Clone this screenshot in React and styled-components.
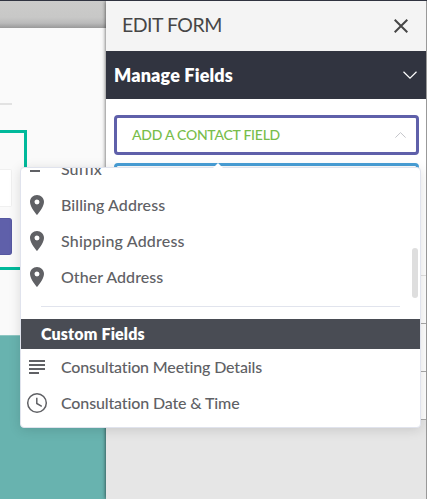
import React from "react";
import styled, { createGlobalStyle } from "styled-components";

const Global = createGlobalStyle`
  *, *::before, *::after { box-sizing: border-box; }
  body { margin: 0; overflow: hidden; font-family: Lato, "Open Sans", sans-serif; }
`;

const Screen = styled.div`
  position: relative;
  width: 427px;
  height: 499px;
  overflow: hidden;
  display: flex;
  border-top: 1px solid #303340;
  background: #fafafa;
`;

const Preview = styled.section`
  width: 106px;
  display: flex;
  flex-direction: column;
  background: #fafafa;
`;

const PreviewBar = styled.div`
  height: 27px;
  background: linear-gradient(#cbcbca 0, #c8c8c7 60%, #bababa 82%, #999 100%);
`;

const PreviewPage = styled.div`
  height: 307px;
`;

const Rule = styled.div`
  width: 12px;
  height: 2px;
  margin-top: 75px;
  background: #e2e2e2;
`;

const SelectedBlock = styled.div`
  width: 27px;
  height: 140px;
  margin-top: 25px;
  padding-top: 36px;
  border: 3px solid #00b99b;
  border-left: 0;
`;

const PreviewInput = styled.div`
  width: 12px;
  height: 38px;
  border: 1px solid #f0f0f0;
  border-left: 0;
  border-radius: 0 2px 2px 0;
  background: #fff;
`;

const PreviewButton = styled.div`
  width: 12px;
  height: 37px;
  margin-top: 11px;
  border: 1px solid #5557a0;
  border-left: 0;
  border-radius: 0 3px 3px 0;
  background: #5f60aa;
`;

const PreviewFooter = styled.div`
  flex: 1;
  border-top: 1px solid #8fc7c3;
  background: #68b3af;
`;

const Panel = styled.aside`
  width: 320px;
  display: flex;
  flex-direction: column;
  background: #e6e6e6;
  box-shadow: 0 0 4px rgba(0, 0, 0, 0.7);
`;

const PanelHeader = styled.header`
  height: 50px;
  padding: 0 18px 0 16px;
  display: flex;
  align-items: center;
  justify-content: space-between;
  background: #f4f4f4;
  color: #464646;
`;

const SectionHeader = styled.div`
  height: 48px;
  padding: 0 9px 0 8px;
  display: flex;
  align-items: center;
  justify-content: space-between;
  background: #313440;
  color: #fff;
`;

const Text = styled.span`
  padding-bottom: ${(p) => p.$lift ?? 1}px;
  font-size: ${(p) => p.$size || 16}px;
  font-weight: ${(p) => p.$weight || 500};
  letter-spacing: ${(p) => p.$spacing || 0}px;
  font-variant-ligatures: none;
  line-height: 20px;
  white-space: nowrap;
`;

const PanelBody = styled.div`
  height: 176px;
  padding: 16px 7px 0 8px;
  display: flex;
  flex-direction: column;
  gap: 8px;
  background: #fff;
`;

const FieldButton = styled.div`
  height: 40px;
  padding: 0 10px 0 15px;
  display: flex;
  flex-shrink: 0;
  align-items: center;
  justify-content: space-between;
  border: 3px solid ${(p) => p.$color};
  border-radius: 4px;
  color: #78bd4b;
`;

const FieldRow = styled.div`
  height: 48px;
  border-top: 1px solid ${(p) => p.$line};
  background: #fff;
`;

const PanelEnd = styled.div`
  height: 1px;
  background: #aaa;
`;

const PageEdge = styled.div`
  width: 1px;
  background: #999;
`;

const Menu = styled.div`
  position: absolute;
  left: 20px;
  top: 166px;
  width: 401px;
  height: 261px;
  border: 1px solid #e0e3ed;
  border-radius: 4px;
  background: #fff;
  box-shadow: 0 2px 12px rgba(0, 0, 0, 0.13);
`;

const MenuCaret = styled.div`
  position: absolute;
  left: 192px;
  top: -5px;
  border: 5px solid transparent;
  border-top: 0;
  border-bottom-color: #fff;
`;

const MenuViewport = styled.div`
  height: 100%;
  overflow: hidden;
  display: flex;
  flex-direction: column;
  border-radius: 3px;
`;

const MenuItem = styled.div`
  height: 36px;
  flex-shrink: 0;
  display: flex;
  align-items: center;
  color: #606165;
  padding-left: 4px;
  &:first-child { margin-top: -17px; }
`;

const IconSlot = styled.span`
  width: 24px;
  height: 24px;
  margin-right: 12px;
  svg { display: block; }
`;

const Divider = styled.div`
  height: 1px;
  margin: 11px 20px 12px;
  flex-shrink: 0;
  background: #e1e4ed;
`;

const GroupHeader = styled.div`
  height: 30px;
  flex-shrink: 0;
  padding-left: 20px;
  display: flex;
  align-items: center;
  background: #494c54;
  color: #fff;
`;

const ScrollThumb = styled.div`
  position: absolute;
  right: 2px;
  top: 80px;
  width: 6px;
  height: 50px;
  border-radius: 3px;
  background: #dedede;
`;

const CloseIcon = () => (
  <svg width="14" height="14" viewBox="0 0 14 14" fill="none" stroke="#464646" strokeWidth="2">
    <path d="M.7.7l12.6 12.6M13.3.7L.7 13.3" />
  </svg>
);

const ChevronDown = () => (
  <svg width="14" height="8" viewBox="0 0 14 8" fill="none" stroke="#fff" strokeWidth="1.2">
    <path d="M.5.7L7 7.1 13.5.7" />
  </svg>
);

const ChevronUp = () => (
  <svg width="11" height="6" viewBox="0 0 11 6" fill="none" stroke="#c4c5ca" strokeWidth="1">
    <path d="M.4 5.6L5.5.6l5.1 5" />
  </svg>
);

const icons = {
  text: <path d="M5 4h14v2H5zM5 8h14v2H5zM5 13h10v2H5z" fill="#606165" />,
  pin: (
    <path
      fill="#606165"
      d="M12 2C8.13 2 5 5.13 5 9c0 5.25 7 13 7 13s7-7.75 7-13c0-3.87-3.13-7-7-7zm0 9.5a2.5 2.5 0 0 1 0-5 2.5 2.5 0 0 1 0 5z"
    />
  ),
  lines: <path d="M4 5h16v2H4zM4 9h16v2H4zM4 13h16v2H4zM4 17h10v2H4z" fill="#606165" />,
  clock: (
    <g fill="none" stroke="#606165" strokeWidth="1.5">
      <circle cx="12" cy="12" r="9.3" />
      <path d="M11.8 6.8v5.7l5 2.9" />
    </g>
  ),
};

const Item = ({ icon, label, spacing }) => (
  <MenuItem>
    <IconSlot>
      <svg width="24" height="24" viewBox="0 0 24 24">{icons[icon]}</svg>
    </IconSlot>
    <Text $spacing={spacing}>{label}</Text>
  </MenuItem>
);

export default function App() {
  return (
    <>
      <Global />
      <Screen>
        <Preview>
          <PreviewBar />
          <PreviewPage>
            <Rule />
            <SelectedBlock>
              <PreviewInput />
              <PreviewButton />
            </SelectedBlock>
          </PreviewPage>
          <PreviewFooter />
        </Preview>
        <Panel>
          <PanelHeader>
            <Text $size={19.5} $weight={400} $spacing={-0.5} $lift={2}>EDIT FORM</Text>
            <CloseIcon />
          </PanelHeader>
          <SectionHeader>
            <Text $size={18} $weight={800} $spacing={0.15} $lift={1}>Manage Fields</Text>
            <ChevronDown />
          </SectionHeader>
          <PanelBody>
            <FieldButton $color="#5f60aa">
              <Text $size={14} $spacing={-0.25} $lift={0}>ADD A CONTACT FIELD</Text>
              <ChevronUp />
            </FieldButton>
            <FieldButton $color="#489fd7" />
          </PanelBody>
          <FieldRow $line="#e2e2e2" />
          <FieldRow $line="#aaa" />
          <FieldRow $line="#aaa" />
          <PanelEnd />
        </Panel>
        <PageEdge />
        <Menu>
          <MenuCaret />
          <MenuViewport>
            <Item icon="text" label="Suffix" />
            <Item icon="pin" label="Billing Address" spacing={0.07} />
            <Item icon="pin" label="Shipping Address" spacing={0.18} />
            <Item icon="pin" label="Other Address" spacing={0.04} />
            <Divider />
            <GroupHeader>
              <Text $weight={800} $spacing={0.16} $lift={1}>Custom Fields</Text>
            </GroupHeader>
            <Item icon="lines" label="Consultation Meeting Details" spacing={-0.15} />
            <Item icon="clock" label="Consultation Date &amp; Time" spacing={-0.14} />
          </MenuViewport>
          <ScrollThumb />
        </Menu>
      </Screen>
    </>
  );
}
